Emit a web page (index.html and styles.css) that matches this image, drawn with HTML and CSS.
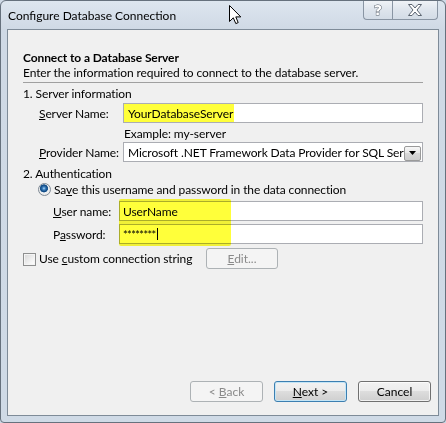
FILE: index.html
```html
<!DOCTYPE html>
<html>
<head>
<meta charset="utf-8">
<title>Configure Database Connection</title>
<link rel="stylesheet" href="styles.css">
</head>
<body>
<div class="window">
  <div class="titlebar">
    <div class="title">Configure Database Connection</div>
    <div class="caption">
      <div class="cap cap-help">
        <svg width="14" height="16" viewBox="0 0 14 16"><text x="7" y="13" text-anchor="middle" class="glyph">?</text></svg>
      </div>
      <div class="cap cap-close">
        <svg width="16" height="12" viewBox="0 0 16 12"><path d="M1.5 0.5 H5 L8 4 L11 0.5 H14.5 L10 6 L14.5 11.5 H11 L8 8 L5 11.5 H1.5 L6 6 Z" fill="#fff" stroke="#5b6470" stroke-width="1" stroke-linejoin="round"/></svg>
      </div>
    </div>
  </div>
  <div class="client">
    <div class="heading">Connect to a Database Server</div>
    <div class="desc">Enter the information required to connect to the database server.</div>
    <div class="sep"></div>
    <div class="group-title">1. Server information</div>
    <div class="row row-server">
      <span class="lbl lbl-server"><u>S</u>erver Name:</span>
      <div class="textbox textbox-server"><span class="hl">YourDatabaseServer</span></div>
    </div>
    <div class="example">Example: my-server</div>
    <div class="row row-provider">
      <span class="lbl lbl-server"><u>P</u>rovider Name:</span>
      <div class="combo">
        <span class="combo-text">Microsoft .NET Framework Data Provider for SQL Server</span>
        <span class="combo-btn"><svg width="7" height="4" viewBox="0 0 7 4"><path d="M0 0 H7 L3.5 4 Z" fill="#000"/></svg></span>
      </div>
    </div>
    <div class="group-title group-auth">2. Authentication</div>
    <div class="radio-row">
      <span class="radio"></span>
      <span>Sa<u>v</u>e this username and password in the data connection</span>
    </div>
    <div class="cred">
      <div class="row row-user">
        <span class="lbl lbl-user"><u>U</u>ser name:</span>
        <div class="textbox">UserName</div>
      </div>
      <div class="row row-pass">
        <span class="lbl lbl-user">P<u>a</u>ssword:</span>
        <div class="textbox"><span class="stars">********</span><span class="caret"></span></div>
      </div>
      <div class="marker"></div>
    </div>
    <div class="check-row">
      <span class="check"></span>
      <span class="check-label">Use <u>c</u>ustom connection string</span>
      <button class="btn btn-edit disabled"><u>E</u>dit...</button>
    </div>
    <div class="buttons">
      <button class="btn disabled">&lt; <u>B</u>ack</button>
      <button class="btn default"><u>N</u>ext &gt;</button>
      <button class="btn">Cancel</button>
    </div>
  </div>
  <svg class="cursor" width="13" height="20" viewBox="0 0 13 20"><path d="M0.5 0.5 V16.5 L4.3 12.8 L6.8 18.6 L9.2 17.6 L6.8 11.9 H11.8 Z" fill="#fff" stroke="#000" stroke-width="1" stroke-linejoin="miter"/></svg>
</div>
</body>
</html>
```
FILE: styles.css
```css
html, body {
  margin: 0;
  padding: 0;
  background: #cfdae6;
}

.window {
  position: relative;
  box-sizing: border-box;
  width: 446px;
  height: 423px;
  border: 1px solid #66717d;
  border-radius: 6px 6px 4px 4px;
  background: linear-gradient(#dde6ef, #cfd9e5 28px, #cfdae6);
  display: flex;
  flex-direction: column;
  font-family: Lato, "Noto Sans", sans-serif;
  font-size: 12px;
  line-height: 15px;
  color: #000;
  overflow: hidden;
}

.titlebar {
  flex: none;
  height: 28px;
  display: flex;
  justify-content: space-between;
  align-items: flex-start;
}

.title {
  padding: 7px 0 0 7px;
  color: #000;
}

.caption {
  display: flex;
  margin: -1px 7px 0 0;
  height: 20px;
}

.cap {
  box-sizing: border-box;
  height: 20px;
  border: 1px solid #8995a3;
  border-top: none;
  background: linear-gradient(#f1f4f8, #dde4ec 55%, #d3dce6);
  display: flex;
  align-items: center;
  justify-content: center;
}

.cap-help {
  width: 29px;
  border-radius: 0 0 0 4px;
  border-right: none;
}

.cap-close {
  width: 46px;
  border-radius: 0 0 4px 0;
}

.glyph {
  font-family: "DejaVu Sans", sans-serif;
  font-size: 14px;
  font-weight: bold;
  fill: #fff;
  stroke: #5b6470;
  stroke-width: 1;
  paint-order: stroke;
}

.client {
  flex: 1;
  margin: 0 6px 6px 6px;
  border: 1px solid #7e8b98;
  background: #f0f0f0;
  display: flex;
  flex-direction: column;
  padding: 20px 15px 13px 15px;
  letter-spacing: -0.1px;
}

.heading {
  font-weight: bold;
}

.sep {
  margin-top: 2px;
  height: 1px;
  background: #a0a0a0;
}

.group-title {
  margin-top: 3px;
}

.group-auth {
  margin-top: 4px;
}

.row {
  display: flex;
  align-items: center;
  height: 20px;
}

.row-server {
  margin-top: 2px;
}

.row-provider {
  margin-top: 1px;
}

.lbl {
  flex: none;
}

.lbl-server {
  margin-left: 16px;
  width: 84px;
}

.lbl-user {
  margin-left: 30px;
  width: 66px;
}

.textbox {
  flex: 1;
  box-sizing: border-box;
  height: 20px;
  border: 1px solid #abadb3;
  background: #fff;
  display: flex;
  align-items: center;
  padding-left: 3px;
  white-space: nowrap;
}

.textbox-server {
  padding-left: 0;
  align-items: stretch;
}

.hl {
  background: #ffff3a;
  padding: 0 1px 0 4px;
  display: flex;
  align-items: center;
}

.example {
  margin-top: 3px;
  padding-left: 101px;
}

.combo {
  flex: 1;
  box-sizing: border-box;
  height: 20px;
  border: 1px solid #abadb3;
  background: #fff;
  display: flex;
  align-items: center;
  overflow: hidden;
}

.combo-text {
  flex: 1;
  padding-left: 4px;
  white-space: nowrap;
  overflow: hidden;
}

.combo-btn {
  flex: none;
  box-sizing: border-box;
  width: 17px;
  height: 15px;
  margin: 2px 1px 0 0;
  border: 1px solid #9a9a9a;
  border-radius: 2px;
  background: linear-gradient(#f7f7f7, #e6e6e6 50%, #d8d8d8 50%, #cdcdcd);
  display: flex;
  align-items: center;
  justify-content: center;
}

.radio-row {
  margin-top: 1px;
  display: flex;
  align-items: center;
  height: 15px;
  padding-left: 15px;
  gap: 3px;
}

.radio {
  flex: none;
  box-sizing: border-box;
  width: 13px;
  height: 13px;
  border-radius: 50%;
  border: 1px solid #7f8a95;
  background:
    radial-gradient(circle at 45% 40%, #b6def7 0, #3a7fc0 1.5px, #134a82 3.2px, #1d5c98 3.8px, rgba(255,255,255,0) 4.3px),
    radial-gradient(circle, #ffffff 0, #e9e9e9 5.5px);
}

.cred {
  position: relative;
  margin-top: 4px;
}

.row-pass {
  margin-top: 3px;
}

.stars {
  letter-spacing: -0.6px;
  font-size: 11px;
}

.caret {
  display: inline-block;
  width: 1px;
  height: 12px;
  background: #000;
  margin-left: 1px;
}

.marker {
  position: absolute;
  left: 96px;
  top: -2px;
  width: 112px;
  height: 47px;
  background: #ffff3a;
  mix-blend-mode: multiply;
  border-radius: 2px;
}

.check-row {
  margin-top: 4px;
  display: flex;
  align-items: center;
  height: 21px;
}

.check {
  flex: none;
  box-sizing: border-box;
  width: 13px;
  height: 13px;
  border: 1px solid #8e8f8f;
  background: linear-gradient(135deg, #d6d6d6, #f5f5f5 70%, #ffffff);
  box-shadow: inset 0 0 0 1px #f4f4f4;
  margin-top: 1px;
}

.check-label {
  flex: none;
  width: 167px;
  margin-left: 3px;
}

.btn {
  box-sizing: border-box;
  width: 73px;
  height: 21px;
  padding: 0;
  font-family: Lato, "Noto Sans", sans-serif;
  font-size: 12px;
  line-height: 15px;
  color: #000;
  border: 1px solid #707070;
  border-radius: 3px;
  background: linear-gradient(#f2f2f2, #ebebeb 50%, #dddddd 50%, #cfcfcf);
  box-shadow: inset 0 0 0 1px rgba(255,255,255,0.7);
}

.btn.disabled {
  color: #8a8a8a;
  border-color: #adb2b5;
  background: #f4f4f4;
  box-shadow: none;
}

.btn.default {
  border-color: #3c7fb1;
  box-shadow: inset 0 0 0 1px #c4e5f6;
}

.btn-edit {
  width: 72px;
}

.buttons {
  margin-top: auto;
  margin-right: -8px;
  display: flex;
  justify-content: flex-end;
  gap: 11px;
}

.cursor {
  position: absolute;
  left: 228px;
  top: 4px;
}
```
